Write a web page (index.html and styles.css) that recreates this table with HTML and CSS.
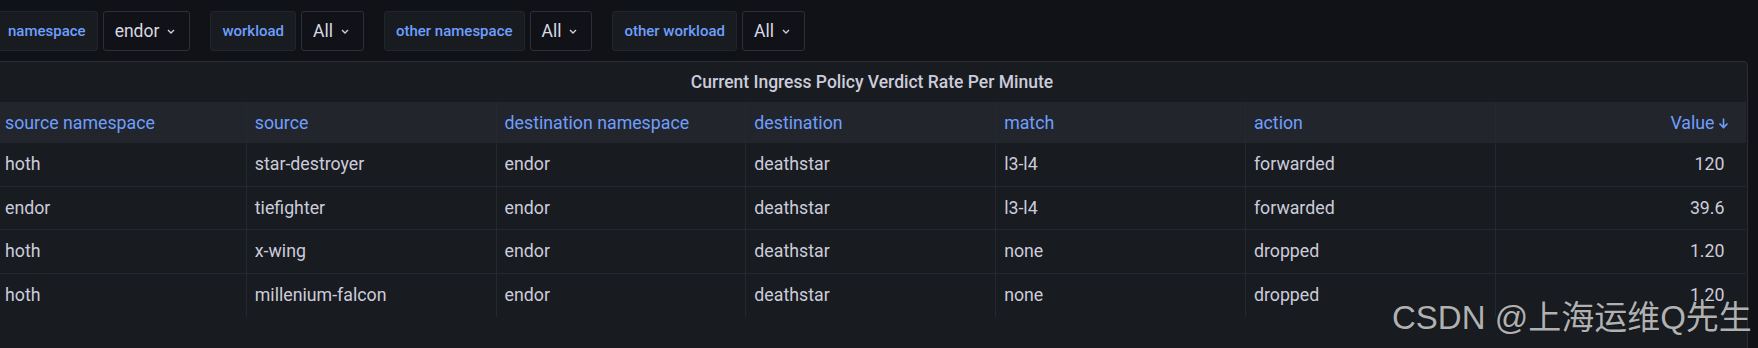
FILE: index.html
```html
<!DOCTYPE html>
<html lang="en">
<head>
<meta charset="utf-8">
<title>Ingress Policy Verdicts</title>
<link rel="stylesheet" href="styles.css">
</head>
<body>
<div class="page">
  <div class="vars">
    <div class="var">
      <span class="var-label">namespace</span>
      <div class="select">endor<svg class="chev" width="8" height="5" viewBox="0 0 8 5"><polyline points="1,1 4,4 7,1"/></svg></div>
    </div>
    <div class="var">
      <span class="var-label">workload</span>
      <div class="select">All<svg class="chev" width="8" height="5" viewBox="0 0 8 5"><polyline points="1,1 4,4 7,1"/></svg></div>
    </div>
    <div class="var">
      <span class="var-label">other namespace</span>
      <div class="select">All<svg class="chev" width="8" height="5" viewBox="0 0 8 5"><polyline points="1,1 4,4 7,1"/></svg></div>
    </div>
    <div class="var">
      <span class="var-label">other workload</span>
      <div class="select">All<svg class="chev" width="8" height="5" viewBox="0 0 8 5"><polyline points="1,1 4,4 7,1"/></svg></div>
    </div>
  </div>

  <section class="panel">
    <header class="panel-title">Current Ingress Policy Verdict Rate Per Minute</header>
    <div class="table">
      <div class="row head">
        <div class="cell">source namespace</div>
        <div class="cell">source</div>
        <div class="cell">destination namespace</div>
        <div class="cell">destination</div>
        <div class="cell">match</div>
        <div class="cell">action</div>
        <div class="cell num">Value<svg class="sort" width="11" height="12" viewBox="0 0 11 12"><path d="M5.5 1.5V10.5M1.5 6.5L5.5 10.5L9.5 6.5"/></svg></div>
      </div>
      <div class="row">
        <div class="cell">hoth</div><div class="cell">star-destroyer</div><div class="cell">endor</div><div class="cell">deathstar</div><div class="cell">l3-l4</div><div class="cell">forwarded</div><div class="cell num">120</div>
      </div>
      <div class="row">
        <div class="cell">endor</div><div class="cell">tiefighter</div><div class="cell">endor</div><div class="cell">deathstar</div><div class="cell">l3-l4</div><div class="cell">forwarded</div><div class="cell num">39.6</div>
      </div>
      <div class="row">
        <div class="cell">hoth</div><div class="cell">x-wing</div><div class="cell">endor</div><div class="cell">deathstar</div><div class="cell">none</div><div class="cell">dropped</div><div class="cell num">1.20</div>
      </div>
      <div class="row last">
        <div class="cell">hoth</div><div class="cell">millenium-falcon</div><div class="cell">endor</div><div class="cell">deathstar</div><div class="cell">none</div><div class="cell">dropped</div><div class="cell num">1.20</div>
      </div>
    </div>
  </section>

  <div class="watermark">CSDN @上海运维Q先生</div>
</div>
</body>
</html>
```

FILE: styles.css
```css
html, body {
  margin: 0;
  padding: 0;
  background: #111217;
  overflow: hidden;
}

body {
  width: 1758px;
  height: 348px;
  font-family: Roboto, "Noto Sans", sans-serif;
  color: #ccccdc;
}

.page {
  position: relative;
  margin-left: -4px;
  height: 348px;
}

.vars {
  display: flex;
  gap: 20px;
  padding-top: 11px;
  height: 40px;
}

.var {
  display: flex;
  gap: 5px;
}

.var-label {
  display: flex;
  align-items: center;
  box-sizing: border-box;
  height: 40px;
  padding: 0 11px;
  background: #181b1f;
  border: 1px solid #22252b;
  border-radius: 3px;
  color: #6e9fff;
  font-size: 15px;
  font-weight: 500;
}

.select {
  display: flex;
  align-items: center;
  box-sizing: border-box;
  height: 40px;
  padding: 0 14px 0 11px;
  background: #111217;
  border: 1px solid #2c2f36;
  border-radius: 3px;
  color: #d8d9e3;
  font-size: 17.5px;
}

.chev {
  margin-left: 8px;
  fill: none;
  stroke: #ccccdc;
  stroke-width: 1.4;
}

.panel {
  margin-top: 10px;
  box-sizing: border-box;
  width: 1752px;
  height: 300px;
  background: #181b1f;
  border: 1px solid #2a2c32;
  border-radius: 4px;
}

.panel-title {
  height: 40px;
  display: flex;
  align-items: center;
  justify-content: center;
  font-size: 17.5px;
  font-weight: 500;
  color: #ccccdc;
}

.table {
  width: 1748.5px;
  font-size: 17.75px;
}

.row {
  display: grid;
  grid-template-columns: repeat(7, 1fr);
  height: 43.5px;
  box-sizing: border-box;
  border-bottom: 1px solid #25282e;
}

.row.head {
  height: 41px;
  background: #22252b;
  border-bottom: none;
  color: #6e9fff;
}

.row.last {
  border-bottom: none;
}

.cell {
  display: flex;
  align-items: center;
  box-sizing: border-box;
  padding: 0 8px;
  border-right: 1px solid #25282e;
  white-space: nowrap;
}

.cell:last-child {
  border-right: none;
}

.cell.num {
  justify-content: flex-end;
  padding-right: 21px;
}

.row.head .cell.num {
  padding-right: 17px;
}

.sort {
  margin-left: 3px;
  fill: none;
  stroke: #6e9fff;
  stroke-width: 1.6;
}

.watermark {
  position: absolute;
  left: 1396px;
  top: 291px;
  font-family: "Liberation Sans", "Noto Sans CJK SC", sans-serif;
  font-size: 33px;
  color: rgba(215, 215, 215, 0.82);
  white-space: nowrap;
  text-shadow: 0 0 1px rgba(0, 0, 0, 0.4);
}
```
